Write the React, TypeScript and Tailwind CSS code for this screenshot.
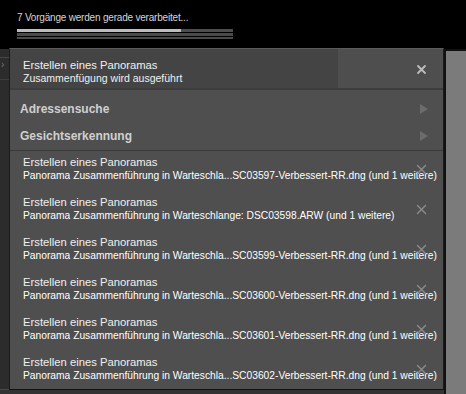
import React from "react";

// Warteschlange der Hintergrund-Vorgänge (Lightroom-Aktivitätsmenü).
const JOBS = [
  "Panorama Zusammenführung in Warteschla...SC03597-Verbessert-RR.dng (und 1 weitere)",
  "Panorama Zusammenführung in Warteschlange: DSC03598.ARW (und 1 weitere)",
  "Panorama Zusammenführung in Warteschla...SC03599-Verbessert-RR.dng (und 1 weitere)",
  "Panorama Zusammenführung in Warteschla...SC03600-Verbessert-RR.dng (und 1 weitere)",
  "Panorama Zusammenführung in Warteschla...SC03601-Verbessert-RR.dng (und 1 weitere)",
  "Panorama Zusammenführung in Warteschla...SC03602-Verbessert-RR.dng (und 1 weitere)",
];

function Cross({ strong }: { strong?: boolean }) {
  return (
    <svg width="11" height="11" viewBox="0 0 11 11" className="block">
      <path
        d={strong ? "M2 2 L9 9 M9 2 L2 9" : "M1.5 1.5 L9.5 9.5 M9.5 1.5 L1.5 9.5"}
        stroke={strong ? "#bdbdbd" : "#8c8c8c"}
        strokeWidth={strong ? 1.8 : 1.4}
        strokeLinecap="round"
      />
    </svg>
  );
}

function Arrow() {
  return (
    <svg width="8" height="10" viewBox="0 0 8 10" className="block">
      <path d="M0 0 L8 5 L0 10 Z" fill="#6c6c6c" />
    </svg>
  );
}

export default function App() {
  return (
    <div className="relative w-[466px] h-[394px] overflow-hidden bg-black font-['Liberation_Sans',Arial,sans-serif]">
      {/* Statuszeile oben */}
      <div className="h-[49px] pl-[17px] pt-[12px]">
        <div className="text-[10px] leading-[12px] tracking-[-0.2px] text-[#d6d6d6]">7 Vorgänge werden gerade verarbeitet...</div>
        <div className="mt-[5px] w-[216px] flex flex-col gap-[1px]">
          <div className="h-[3px] bg-[#4d4d4d] flex">
            <div className="w-[164px] bg-[#bdbdbd]" />
          </div>
          <div className="h-[3px] bg-[#4a4a4a]" />
          <div className="h-[2px] bg-[#4a4a4a]" />
        </div>
      </div>

      {/* Arbeitsfläche dahinter */}
      <div className="flex h-[345px]">
        <div className="w-[444px] bg-[#2c2c2c] flex flex-col">
          <div className="h-[9px] border-b border-[#454545]" />
          <div className="h-[14px] pl-[1px] text-[10px] leading-[14px] text-[#777]">›</div>
          <div className="h-[8px] border-b border-[#3f3f3f]" />
          <div className="flex-1" />
          <div className="h-[5px] border-t border-[#4a4a4a] bg-[#333]" />
        </div>
        <div className="w-[22px] border-t-2 border-l-2 border-[#111] bg-[#7b7b7b]" />
      </div>

      {/* Aufgeklapptes Menü */}
      <div className="absolute left-[9px] top-[48px] w-[435px] h-[342px] bg-[#4f4f4f] border border-t-[#5c5c5c] border-x-[#1b1b1b] border-b-[#111] text-[#f0f0f0]">
        <div className="h-[41px] flex border-b-2 border-[#3d3d3d]">
          <div className="w-[328px] bg-[#444] pl-[13px] pt-[10px]">
            <div className="text-[11.25px] leading-[13px]">Erstellen eines Panoramas</div>
            <div className="text-[10.5px] leading-[12px]">Zusammenfügung wird ausgeführt</div>
          </div>
          <div className="flex-1 bg-[#4e4e4e] flex items-center justify-end pr-[16px] pt-[2px]">
            <Cross strong />
          </div>
        </div>

        <div className="pt-[5px] pb-[1px] border-b border-[#3a3a3a]">
          {["Adressensuche", "Gesichtserkennung"].map((s) => (
            <div key={s} className="h-[27px] flex items-center justify-between pl-[10px] pr-[15px]">
              <span className="text-[12px] font-bold text-[#cfcfcf]">{s}</span>
              <Arrow />
            </div>
          ))}
        </div>

        {JOBS.map((j, i) => (
          <div key={i} className="relative h-[40px] pl-[13px] pt-[5px] whitespace-nowrap">
            <div className="text-[11.25px] leading-[13px]">Erstellen eines Panoramas</div>
            <div className="text-[10.25px] leading-[13px] text-white">{j}</div>
            <div className="absolute right-[16px] top-[13px]">
              <Cross />
            </div>
          </div>
        ))}
      </div>
    </div>
  );
}
